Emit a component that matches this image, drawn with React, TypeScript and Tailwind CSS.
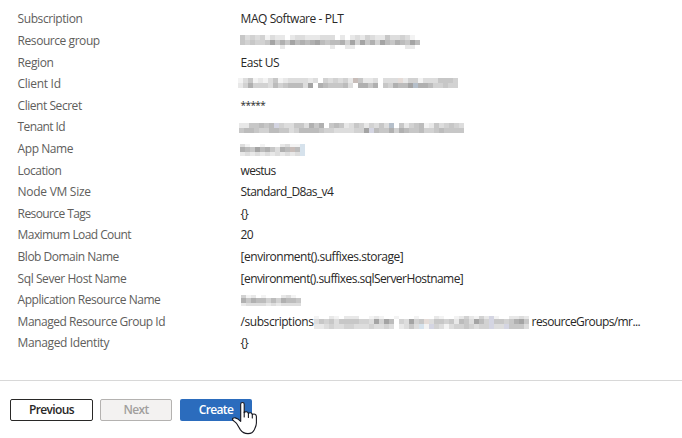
import React from "react";

type MosaicProps = { rows: string[]; heights: number[]; className: string; cell?: number };

// Pixelated redaction strip: each digit is the darkness of one cell, letters are tinted cells.
const TONES: Record<string, string> = {
  "0": "#ffffff", "1": "#f3f3f3", "2": "#e8e8e8", "3": "#dddddd", "4": "#d2d2d2",
  "5": "#c7c7c7", "6": "#bcbcbc", "7": "#b0b0b0", "8": "#a4a4a4", "9": "#969696",
  b: "#d6e2ec", w: "#e5dcd8", v: "#d4d5e2", c: "#b5bfca", r: "#c8bdb9",
};

function Mosaic({ rows, heights, className, cell = 5 }: MosaicProps) {
  const width = rows[0].length * cell;
  const total = heights.reduce((a, b) => a + b, 0);
  let y = 0;
  return (
    <svg width={width} height={total} shapeRendering="crispEdges" className={"shrink-0 " + className} aria-hidden="true">
      {rows.map((row, r) => {
        const top = y;
        y += heights[r];
        return row.split("").map((t, c) => (
          <rect key={r + "-" + c} x={c * cell} y={top} width={cell} height={heights[r]} fill={TONES[t]} />
        ));
      })}
    </svg>
  );
}

type Row = { label: string; ls: string; value: React.ReactNode; vs?: string };

const ROWS: Row[] = [
  { label: "Subscription", ls: "tracking-[-0.42px]", value: "MAQ Software - PLT", vs: "tracking-[-0.44px]" },
  {
    label: "Resource group",
    ls: "tracking-[-0.44px]",
    value: (
      <Mosaic
        className="mt-[2px] ml-[-1px]"
        heights={[5, 5, 4]}
        rows={["534341322023322233302023243225334310", "545445857586767865667484857486576586", "000000002000000000200220000000000220"]}
      />
    ),
  },
  { label: "Region", ls: "tracking-[-0.4px]", value: "East US", vs: "tracking-[-0.45px]" },
  {
    label: "Client Id",
    ls: "tracking-[-0.3px]",
    value: (
      <Mosaic
        className="mt-[-1px] ml-[-3px]"
        heights={[5, 5]}
        rows={["13512135123333230434342r52230333w24413335554", "24744436456663807655563077570547668c77644544"]}
      />
    ),
  },
  { label: "Client Secret", ls: "tracking-[-0.46px]", value: <span className="text-[10px]">*****</span>, vs: "tracking-[-0.6px]" },
  {
    label: "Tenant Id",
    ls: "tracking-[-0.6px]",
    value: (
      <Mosaic
        className="mt-px ml-[-2px]"
        heights={[5, 5]}
        rows={["2255656v4335537570565235424353c05245612534543", "56654466553466665443333448v655747655644565555"]}
      />
    ),
  },
  {
    label: "App Name",
    ls: "tracking-[-0.44px]",
    value: <Mosaic className="mt-[3px] ml-[-1px]" heights={[3, 5, 4]} rows={["310010002311b", "7658675376r6b", "232323232323b"]} />,
  },
  { label: "Location", ls: "tracking-[-0.5px]", value: "westus", vs: "tracking-[-0.7px]" },
  { label: "Node VM Size", ls: "tracking-[-0.28px]", value: "Standard_D8as_v4", vs: "tracking-[-0.62px]" },
  { label: "Resource Tags", ls: "tracking-[-0.6px]", value: "{}", vs: "tracking-[-0.8px]" },
  { label: "Maximum Load Count", ls: "tracking-[-0.58px]", value: "20", vs: "tracking-[-0.6px]" },
  { label: "Blob Domain Name", ls: "tracking-[-0.5px]", value: "[environment().suffixes.storage]", vs: "tracking-[-0.49px]" },
  { label: "Sql Sever Host Name", ls: "tracking-[-0.43px]", value: "[environment().suffixes.sqlServerHostname]", vs: "tracking-[-0.56px]" },
  {
    label: "Application Resource Name",
    ls: "tracking-[-0.46px]",
    value: <Mosaic className="mt-[2px]" heights={[3, 5, 3]} rows={["412010002310", "757664647665", "233332323333"]} />,
  },
  {
    label: "Managed Resource Group Id",
    ls: "tracking-[-0.48px]",
    vs: "tracking-[-0.45px]",
    value: (
      <>
        <span className="w-[73px] shrink-0">/subscriptions</span>
        <Mosaic
          className="mt-px"
          heights={[3, 5, 5]}
          rows={[
            "10021022200121001000100021001242142v1002232",
            "3545355554438486043845w355452653864v5545785",
            "223433443334334302353b1v43134454344v33v5553",
          ]}
        />
        <span className="ml-[3px] tracking-[-0.6px]">resourceGroups/mr...</span>
      </>
    ),
  },
  { label: "Managed Identity", ls: "tracking-[-0.38px]", value: "{}", vs: "tracking-[-0.8px]" },
];

function HandCursor() {
  return (
    <svg width="27" height="34" viewBox="0 0 27 34" className="absolute left-[51px] top-[2px]" aria-hidden="true">
      <path
        d="M9.7 20.3V3.3C9.7 .9 13.2 .9 13.2 3.3V11.6C14.4 10.2 17 10.4 17.4 12.4C18.7 11.3 20.9 11.6 21.3 13.4C22.9 12.5 25.4 13 25.4 15.4V22C25.4 25 24 27 23.3 28.7C22.2 31.2 20 32.6 17 32.6C13.5 32.6 11.1 31.3 9.3 28.6L5.8 22.8C4.5 21 2.5 20 1.7 18.9C.9 17.5 2.4 16.5 4.3 16.9C6.8 17.5 8.4 19 9.7 20.3Z"
        fill="#fff" stroke="#17171f" strokeWidth="1.1" strokeLinejoin="round"
      />
      <path d="M13.2 11V16M17.4 12.2V16.5M21.3 13.2V17" fill="none" stroke="#17171f" strokeWidth="1.1" strokeLinecap="round" />
    </svg>
  );
}

export default function App() {
  return (
    <main className="flex h-[438px] w-[682px] flex-col overflow-hidden bg-white font-['Open_Sans','Noto_Sans',sans-serif] text-[12px] text-[#292827]">
      <dl className="h-[380px] pt-[8.4px] pl-[17.6px]">
        {ROWS.map((row) => (
          <div key={row.label} className="flex h-[21.6px] items-center leading-[21.6px] whitespace-nowrap">
            <dt className={"w-[223px] shrink-0 text-[#605e5c] " + row.ls}>{row.label}</dt>
            <dd className={"flex items-center " + (row.vs ?? "")}>{row.value}</dd>
          </div>
        ))}
      </dl>
      <footer className="flex h-[58px] items-start gap-[7px] border-t border-[#d8d8d8] pt-[18px] pl-[10px] font-semibold">
        <button className="h-[22px] w-[83px] rounded-[2px] border border-[#292827] bg-white leading-[20px] tracking-[-0.65px]">Previous</button>
        <button className="h-[22px] w-[72px] rounded-[2px] border border-[#b4b2b0] bg-[#f3f2f1] leading-[20px] tracking-[-0.65px] text-[#a19f9d]">Next</button>
        <button className="relative ml-px h-[22px] w-[72px] rounded-[2px] bg-[#2b6cbd] leading-[22px] tracking-[-0.65px] text-white">
          Create
          <HandCursor />
        </button>
      </footer>
    </main>
  );
}
